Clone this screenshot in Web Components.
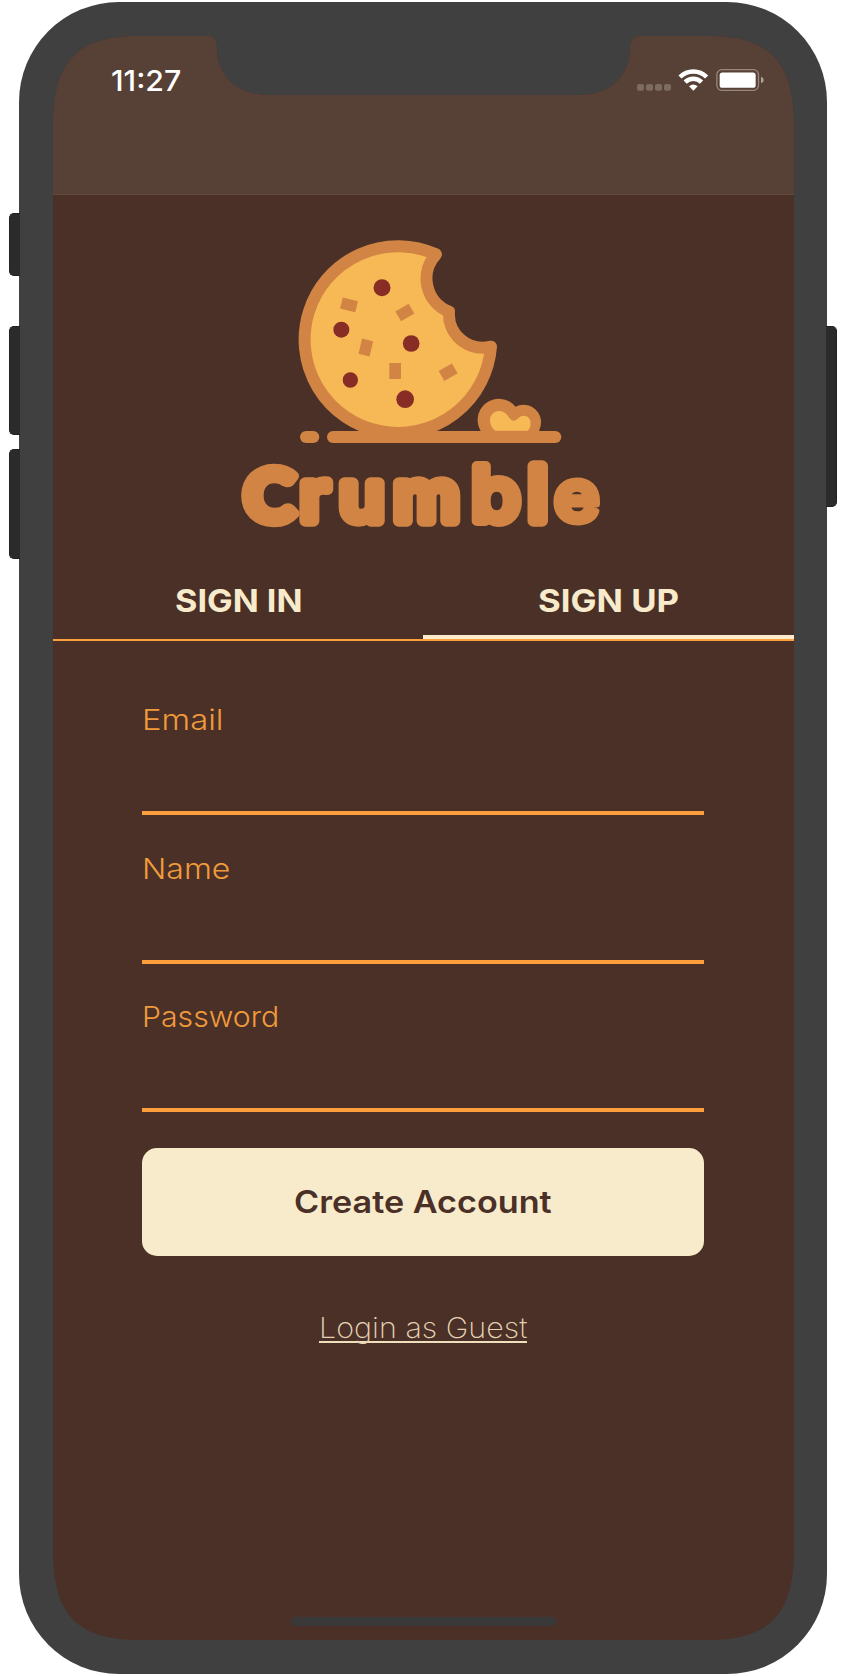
<!DOCTYPE html>
<html lang="en">
<head>
<meta charset="utf-8">
<title>Crumble</title>
<style>
  html, body { margin: 0; background: #fff; }
  body {
    --cocoa: #4a3026; --cream: #f8ebcc; --orange: #fc9f3c; --caramel: #d18444;
    font-family: Inter, "Liberation Sans", sans-serif;
    width: 846px; height: 1676px; overflow: hidden;
  }
</style>
</head>
<body>
<phone-frame>
  <status-header></status-header>
  <crumble-logo></crumble-logo>
  <auth-tabs>
    <fit-text slot="in" width="127" size="31.5" weight="700">SIGN IN</fit-text>
    <fit-text slot="up" width="141" size="31.5" weight="700">SIGN UP</fit-text>
  </auth-tabs>
  <auth-form>
    <form-field><fit-text width="82" size="28" weight="300">Email</fit-text></form-field>
    <form-field><fit-text width="88" size="28" weight="300">Name</fit-text></form-field>
    <form-field><fit-text width="137" size="28" weight="300">Password</fit-text></form-field>
    <primary-button><fit-text width="258" size="31" weight="600">Create Account</fit-text></primary-button>
    <guest-link><fit-text width="208" size="28" weight="200">Login as Guest</fit-text></guest-link>
  </auth-form>
</phone-frame>

<script>
const define = (name, html, connected) => {
  const t = document.createElement('template');
  t.innerHTML = html;
  customElements.define(name, class extends HTMLElement {
    constructor() {
      super();
      this.attachShadow({ mode: 'open' }).append(t.content.cloneNode(true));
    }
    connectedCallback() { if (connected) connected(this, this.shadowRoot); }
  });
};

/* One line of text, stretched horizontally to a given advance width. */
define('fit-text', `
<style>
  :host { display: block; line-height: 34px; white-space: nowrap; }
  span { display: inline-block; transform-origin: 0 50%; }
</style><span><slot></slot></span>`, (el, root) => {
  const w = +el.getAttribute('width');
  el.style.fontSize = el.getAttribute('size') + 'px';
  el.style.fontWeight = el.getAttribute('weight');
  el.style.width = w + 'px';
  const span = root.querySelector('span');
  if (span.offsetWidth) span.style.transform = 'scaleX(' + w / span.offsetWidth + ')';
});

define('phone-frame', `
<style>
  :host { display: block; position: relative; width: 846px; height: 1676px; }
  .body { position: relative; box-sizing: border-box; width: 808.5px; height: 1672.3px; margin: 0 18.7px;
    padding: 34px 33px 34px 34.3px; background: #404040; border-radius: 100px; }
  .wrap { padding-top: 2px; }
  .screen { display: flex; flex-direction: column; width: 741px; height: 1604px; background: var(--cocoa); position: relative;
    clip-path: path("M0 90C0 25 25 0 86 0H155C161 0 164 4 164 12C164 40 184 59 215 59H526C557 59 577 40 577 12C577 4 581 0 588 0H655C716 0 741 25 741 90V1514C741 1579 716 1604 655 1604H86C25 1604 0 1579 0 1514Z"); }
  .key { position: absolute; width: 11px; background: #2b2b2b; box-sizing: border-box; border: 1px solid #222; }
  .l { left: 9px; border-radius: 5px 0 0 5px; border-right: 0; }
  .r { left: 825.5px; border-radius: 0 5px 5px 0; border-left: 0; }
  .home { position: absolute; left: 238px; top: 1581px; width: 265px; height: 8.5px; border-radius: 5px; background: #393939; }
</style>
<div class="wrap"><div class="body"><div class="screen"><slot></slot><div class="home"></div></div></div></div>
<div class="key l" style="top:213px;height:63px"></div>
<div class="key l" style="top:326px;height:109px"></div>
<div class="key l" style="top:449px;height:110px"></div>
<div class="key r" style="top:326px;height:181px"></div>`);

define('status-header', `
<style>
  :host { display: flex; justify-content: space-between; align-items: flex-start; box-sizing: border-box; height: 158.5px;
    padding: 33px 30px 0 58px; background: #574035; border-bottom: 1.5px solid #614839; color: #fff; }
  .icons { display: flex; }
  fit-text { margin-top: -5px; }
</style>
<fit-text width="70" size="29" weight="500">11:27</fit-text>
<svg class="icons" width="128" height="22" viewBox="0 0 384 66">
  <g fill="#7d6a61"><rect x="3" y="45" width="21" height="20" rx="6"/><rect x="30" y="45" width="21" height="20" rx="6"/><rect x="57" y="45" width="21" height="20" rx="6"/><rect x="84" y="45" width="21" height="20" rx="6"/></g>
  <g transform="translate(127 1)">
    <path d="M5 23A57 57 0 0 1 85 23M20.500 38.500A35 35 0 0 1 69.500 38.500" fill="none" stroke="#fff" stroke-width="13.500"/>
    <path d="M45 64L32 51Q45 40 58 51Z" fill="#fff"/>
  </g>
  <rect x="242.500" y="2" width="125" height="62" rx="15" fill="none" stroke="#97877f" stroke-width="4"/>
  <rect x="251" y="10.500" width="108" height="46" rx="8" fill="#fff"/>
  <path d="M375 23Q383 26 383 33Q383 40 375 43Z" fill="#b0a39d"/>
</svg>`);

define('crumble-logo', `
<style>
  :host { display: block; width: 380px; height: 320px; margin: 25.500px 0 0 177px; }
  svg { display: block; overflow: visible; }
  text { font: 500 211px Inter, sans-serif; }
  .cap { font-family: Lato, sans-serif; font-weight: 700; font-size: 215px; }
  .tall { font-size: 225px; }
  .bowl { font-size: 225px; stroke-width: 30px; }
  .end { font-size: 219px; font-weight: 600; stroke-width: 21px; }
</style>
<svg width="380" height="320" viewBox="0 0 1140 960">
  <path d="M618 103A280 280 0 1 0 783 380A101 101 0 0 1 657 275A107 107 0 0 1 618 103Z" fill="#f7b955" stroke="#d18444" stroke-width="36" stroke-linejoin="round"/>
  <g fill="#872d26"><circle cx="456" cy="203.500" r="25.500"/><circle cx="334" cy="329" r="24"/><circle cx="543.500" cy="370.500" r="25"/><circle cx="361" cy="480" r="23"/><circle cx="525.500" cy="537.500" r="26.500"/></g>
  <g fill="#d18444">
    <rect x="-23.500" y="-17" width="47" height="34" transform="translate(357 254.500) rotate(14)"/>
    <rect x="-23" y="-17" width="46" height="34" transform="translate(524.500 277.500) rotate(-30)"/>
    <rect x="-17" y="-23.500" width="34" height="47" transform="translate(407.500 382.500) rotate(13)"/>
    <rect x="478" y="429" width="35" height="48"/>
    <rect x="-23" y="-17" width="46" height="34" transform="translate(654.500 456.500) rotate(-30)"/>
    <path d="M385 632Q504 690 623 632V650H385Z"/>
    <path d="M757 640A62 62 0 0 1 856 560A53 53 0 0 1 928 630V640Z"/>
    <rect x="210" y="633" width="58" height="36" rx="18"/><rect x="291" y="633" width="703" height="36" rx="18"/>
  </g>
  <path d="M796 632C770 612 777 573 808 573C834 573 837 602 850 602C862 602 867 587 881 587C903 587 908 615 894 632Z" fill="#f7b955"/>
  <text x="40 198 309 463 683 843 916" y="904" transform="scale(1.06 1)" fill="#d18444" stroke="#d18444" stroke-width="34" stroke-linejoin="round"><tspan class="cap">C</tspan>rum<tspan class="bowl">b</tspan><tspan class="tall">l</tspan><tspan class="end">e</tspan></text>
</svg>`);

define('auth-tabs', `
<style>
  :host { display: grid; grid-template-columns: 1fr 1fr; position: relative; height: 99px; border-bottom: 2px solid var(--orange); color: var(--cream); flex: none; }
  div { padding-top: 44px; box-sizing: border-box; height: 99px; display: flex; justify-content: center; }
  .on { border-bottom: 4px solid #fcebcd; }
</style>
<div><slot name="in"></slot></div><div class="on"><slot name="up"></slot></div>`);

define('auth-form', `
<style>:host { display: flex; flex-direction: column; padding: 62px 89.5px 0; }</style><slot></slot>`);

define('form-field', `
<style>
  :host { display: flex; flex-direction: column; height: 112px; margin-bottom: 36.500px; color: #f19a3c; }
  input { flex: 1; min-height: 0; padding: 0; border: 0; border-bottom: 4px solid var(--orange); background: none; outline: 0; }
</style><slot></slot><input>`);

define('primary-button', `
<style>
  :host { display: flex; justify-content: center; align-items: center; height: 108px; margin-top: -1px; box-sizing: border-box; border-radius: 15px;
    background: var(--cream); color: var(--cocoa); }
</style><slot></slot>`);

define('guest-link', `
<style>
  :host { display: block; align-self: center; margin-top: 55px; height: 30px; border-bottom: 2px solid #efe0bd; color: #e3d2b3; }
</style><slot></slot>`);
</script>
</body>
</html>
